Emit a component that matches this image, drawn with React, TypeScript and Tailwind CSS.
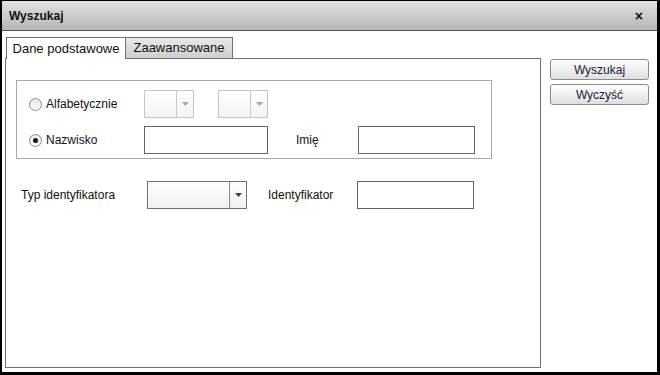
import React from "react";

const font = { fontFamily: '"Liberation Sans", Arial, sans-serif' };

function Radio({ checked }: { checked?: boolean }) {
  return (
    <span className="flex h-[13px] w-[13px] items-center justify-center rounded-full border border-[#8a8a8a] bg-gradient-to-b from-[#e6e6e6] to-[#ffffff]">
      {checked && <span className="h-[5px] w-[5px] rounded-full bg-[#1a1a1a]" />}
    </span>
  );
}

function SmallCombo() {
  return (
    <div className="flex h-[28px] w-[50px] border border-[#c4c4c4] bg-gradient-to-b from-white to-[#f3f3f3]">
      <div className="flex-1" />
      <div className="flex w-[17px] items-center justify-center border-l border-[#c8c8c8]">
        <svg width="7" height="4" viewBox="0 0 7 4">
          <polygon points="0,0 7,0 3.5,4" fill="#a8a8a8" />
        </svg>
      </div>
    </div>
  );
}

function BigCombo() {
  return (
    <div className="flex h-[28px] w-[100px] border border-[#707070] bg-gradient-to-b from-white to-[#f0f0f0]">
      <div className="flex-1" />
      <div className="flex w-[17px] items-center justify-center border-l border-[#8a8a8a]">
        <svg width="7" height="4" viewBox="0 0 7 4">
          <polygon points="0,0 7,0 3.5,4" fill="#404040" />
        </svg>
      </div>
    </div>
  );
}

function Input({ w }: { w: string }) {
  return <div className={`h-[28px] border border-[#646464] bg-white ${w}`} />;
}

function Btn({ label }: { label: string }) {
  return (
    <div className="flex h-[21px] w-[99px] items-center justify-center rounded-[3px] border border-[#8c8c8c] bg-gradient-to-b from-white to-[#dedede] text-[12px] text-[#1c1c3c]">
      {label}
    </div>
  );
}

export default function App() {
  return (
    <div
      style={font}
      className="flex h-[375px] w-[660px] flex-col border-t border-l-2 border-r-[3px] border-b-[3px] border-black bg-white text-[12px] text-[#111]"
    >
      <div className="flex h-[30px] shrink-0 items-center justify-between border-b border-[#555] bg-gradient-to-b from-[#e2e2e2] to-[#b6b6b6] pl-[7px] pr-[14px]">
        <span className="text-[12px] font-bold text-[#111]">Wyszukaj</span>
        <span className="text-[14px] font-bold leading-none text-[#111]">×</span>
      </div>
      <div className="flex flex-1 pl-[3px] pt-[6px]">
        <div className="flex flex-col">
          <div className="flex h-[21px] pl-px">
            <div className="relative z-10 flex h-[22px] w-[120px] items-center justify-center border border-b-0 border-[#707070] bg-white text-[13px] text-[#111]">
              Dane podstawowe
            </div>
            <div className="flex h-[21px] w-[107px] items-center justify-center border border-l-0 border-b-0 border-[#707070] bg-gradient-to-b from-[#e8e8e8] to-[#cfcfcf] text-[13px] text-[#111]">
              Zaawansowane
            </div>
          </div>
          <div className="flex h-[310px] w-[536px] flex-col border border-[#707070] bg-white pl-[10px] pt-[21px]">
            <div className="flex h-[79px] w-[476px] flex-col gap-[8px] border border-[#a8a8a8] pl-[12px] pt-[9px]">
              <div className="flex h-[28px] items-center">
                <div className="flex w-[115px] items-center gap-[4px]">
                  <Radio />
                  <span>Alfabetycznie</span>
                </div>
                <SmallCombo />
                <div className="w-[24px]" />
                <SmallCombo />
              </div>
              <div className="flex h-[28px] items-center">
                <div className="flex w-[115px] items-center gap-[4px]">
                  <Radio checked />
                  <span>Nazwisko</span>
                </div>
                <Input w="w-[124px]" />
                <div className="w-[28px]" />
                <span className="w-[62px]">Imię</span>
                <Input w="w-[117px]" />
              </div>
            </div>
            <div className="mt-[22px] flex h-[28px] items-center pl-[5px]">
              <span className="w-[126px]">Typ identyfikatora</span>
              <BigCombo />
              <div className="w-[21px]" />
              <span className="w-[89px]">Identyfikator</span>
              <Input w="w-[117px]" />
            </div>
          </div>
        </div>
        <div className="ml-[9px] mt-[22px] flex flex-col gap-[4px]">
          <Btn label="Wyszukaj" />
          <Btn label="Wyczyść" />
        </div>
      </div>
    </div>
  );
}
